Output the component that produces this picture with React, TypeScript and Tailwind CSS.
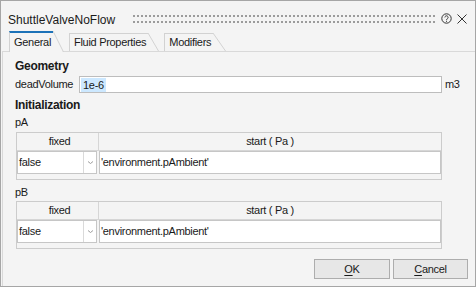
import React from 'react'

const TXT = "text-[11px] tracking-[-0.3px] text-[#1a1a1a]"

function Grip() {
  return (
    <svg width="302" height="8" className="block">
      <defs>
        <pattern id="grip" width="4" height="6" patternUnits="userSpaceOnUse">
          <rect width="2" height="2" fill="#9c9c9c" />
        </pattern>
      </defs>
      <rect width="302" height="8" fill="url(#grip)" />
    </svg>
  )
}

function HelpIcon() {
  return (
    <svg width="11" height="11" viewBox="0 0 11 11" className="block" fill="none" stroke="#333" strokeWidth="1">
      <circle cx="5.5" cy="5.5" r="4.7" />
      <path d="M3.9 4.4a1.6 1.6 0 1 1 2.4 1.4c-.5.3-.8.6-.8 1.3" />
      <rect x="5" y="7.8" width="1" height="1" fill="#333" stroke="none" />
    </svg>
  )
}

function CloseIcon() {
  return (
    <svg width="10" height="10" viewBox="0 0 10 10" className="block" stroke="#333" strokeWidth="1">
      <line x1="0.5" y1="0.5" x2="9.5" y2="9.5" />
      <line x1="9.5" y1="0.5" x2="0.5" y2="9.5" />
    </svg>
  )
}

function Tab({ label, active = false, slant = 10 }: { label: string; active?: boolean; slant?: number }) {
  const h = active ? 21 : 18
  return (
    <div className={active ? 'relative z-10 -mb-px flex h-[21px]' : 'flex h-[18px]'}>
      <div
        className={`flex items-center border-l border-[#d2d2d2] pl-[4px] pr-[2px] bg-[#f4f4f4] ${
          active ? 'border-t-2 border-t-[#1c72b8]' : 'border-t'
        }`}
      >
        {label}
      </div>
      <svg width={slant + 1} height={h} className="block">
        <polygon points={`0,0 ${slant},${h} 0,${h}`} fill="#f4f4f4" />
        <line x1="0" y1="0" x2={slant + 0.5} y2={h} stroke="#d2d2d2" />
      </svg>
    </div>
  )
}

function Chevron() {
  return (
    <svg width="5" height="3" className="block" fill="none" stroke="#9d9d9d">
      <polyline points="0,0.5 2.5,2.5 5,0.5" />
    </svg>
  )
}

function ParamTable() {
  return (
    <div className="ml-px flex w-[426px] flex-col border border-[#cccccc]">
      <div className="flex h-[18px] border-b border-[#d6d6d6]">
        <div className="flex w-[82px] items-center justify-center border-r border-[#d6d6d6] pl-[4px]">fixed</div>
        <div className="flex flex-1 items-center justify-center">start ( Pa )</div>
      </div>
      <div className="flex h-[23px] gap-[2px]">
        <div className="flex w-[80px] border border-[#c6c6c6] bg-white">
          <div className="flex w-[66px] items-center border-r border-[#dadada] pl-[1px]">false</div>
          <div className="flex flex-1 items-center justify-center">
            <Chevron />
          </div>
        </div>
        <div className="flex flex-1 items-center border border-[#c6c6c6] bg-white pl-[1px]">
          'environment.pAmbient'
        </div>
      </div>
      <div className="h-[5px]" />
    </div>
  )
}

export default function App() {
  return (
    <div className={`flex h-[287px] w-[476px] flex-col border border-[#a6a6a6] bg-[#f4f4f4] font-['Liberation_Sans',Arial,sans-serif] ${TXT}`}>
      {/* title bar */}
      <div className="flex h-[30px] items-center pl-[7px] pr-[8px] pt-[6px]">
        <span className="mt-[2px] text-[12px] tracking-normal">ShuttleValveNoFlow</span>
        <div className="ml-auto">
          <Grip />
        </div>
        <div className="-mt-px ml-[6px]">
          <HelpIcon />
        </div>
        <div className="-mt-px ml-[5px]">
          <CloseIcon />
        </div>
      </div>

      {/* tabs */}
      <div className="flex h-[20px] items-end gap-[5px] pl-[8px]">
        <Tab label="General" active slant={10} />
        <Tab label="Fluid Properties" slant={10} />
        <Tab label="Modifiers" slant={12} />
      </div>

      {/* pane */}
      <div className="ml-px flex flex-1 flex-col border-l border-t border-[#d9d9d9] pl-[12px] pt-[7px]">
        <div className="flex h-[14px] items-center text-[12px] font-bold">Geometry</div>

        <div className="mt-[3px] flex h-[17px] items-center">
          <span className="w-[64px]">deadVolume</span>
          <div className="flex h-[17px] w-[363px] items-center border border-[#bdbdbd] bg-white pl-px">
            <span className="bg-[#cce8ff] px-[2px] leading-[14px]">1e-6</span>
          </div>
          <span className="ml-[3px]">m3</span>
        </div>

        <div className="mt-[5px] flex h-[14px] items-center text-[12px] font-bold">Initialization</div>
        <div className="mt-[3px] flex h-[14px] items-center">pA</div>
        <div className="mt-[3px]">
          <ParamTable />
        </div>

        <div className="mt-[5px] flex h-[14px] items-center">pB</div>
        <div className="mt-[2px]">
          <ParamTable />
        </div>

        <div className="mt-auto flex justify-end gap-[3px] pb-[7px] pr-[7px]">
          <button className="h-[20px] w-[76px] border border-[#adadad] bg-[#e7e7e7]">
            <span className="underline underline-offset-[2px]">O</span>K
          </button>
          <button className="h-[20px] w-[75px] border border-[#adadad] bg-[#e7e7e7]">
            <span className="underline underline-offset-[2px]">C</span>ancel
          </button>
        </div>
      </div>
    </div>
  )
}
